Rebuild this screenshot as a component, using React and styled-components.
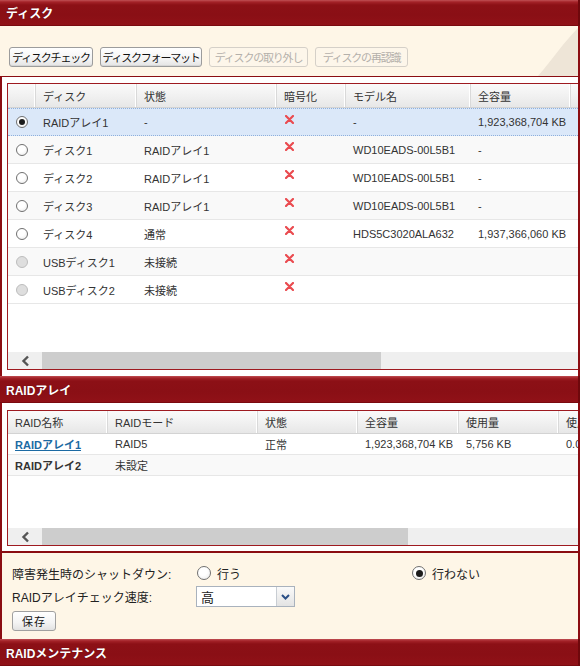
import React from "react";
import styled, { createGlobalStyle } from "styled-components";

const GlobalStyle = createGlobalStyle`
  html, body { margin: 0; padding: 0; background: #fff; }
  body {
    font-family: "Liberation Sans", "Noto Sans CJK JP", sans-serif;
    color: #333;
  }
  *, *::before, *::after { box-sizing: border-box; }
`;

const RED = "#8b0d12";

const Page = styled.div`
  width: 580px;
  display: flex;
  flex-direction: column;
`;

const SectionBar = styled.div`
  height: ${(p) => p.h || 27}px;
  flex-shrink: 0;
  display: flex;
  align-items: center;
  padding-left: 6px;
  color: #fff;
  font-size: 12px;
  font-weight: bold;
  text-shadow: 0 0 1px rgba(0, 0, 0, 0.4);
  background: linear-gradient(#c05055 0, #a42228 2px, #8c1016 5px, #8a0f15 60%, #901117 100%);
  border-right: 2px solid #6e080c;
  border-bottom: 1px solid #7a0a0f;
`;

const Toolbar = styled.div`
  position: relative;
  height: 50px;
  flex-shrink: 0;
  background: #fef6e7;
  border-right: 2px solid ${RED};
  display: flex;
  align-items: flex-end;
  gap: 7px;
  padding: 0 0 9px 9px;
  overflow: hidden;
`;

const Swoosh = styled.svg`
  position: absolute;
  right: 0;
  top: 0;
`;

const ToolButton = styled.button`
  position: relative;
  width: ${(p) => p.w}px;
  height: 20px;
  flex-shrink: 0;
  padding: 0;
  font-family: inherit;
  font-size: 11px;
  letter-spacing: -1.2px;
  white-space: nowrap;
  overflow: visible;
  border-radius: 3px;
  color: ${(p) => (p.disabled ? "#b4b0aa" : "#111")};
  border: 1px solid ${(p) => (p.disabled ? "#d5d0c8" : "#9c9c9c")};
  background: ${(p) =>
    p.disabled ? "#fdf6ea" : "linear-gradient(#ffffff, #f4f4f4 60%, #e4e4e4)"};
  box-shadow: ${(p) => (p.disabled ? "none" : "inset 0 -1px 0 #d6d6d6")};
`;

const GridPanel = styled.div`
  background: #fff;
  flex-shrink: 0;
  border-left: 2px solid ${RED};
  border-right: 2px solid ${RED};
  border-top: ${(p) => (p.topLine ? `1px solid ${RED}` : "none")};
  padding: ${(p) => p.pad};
`;

const GridBox = styled.div`
  border: 1px solid #9e1a20;
  border-right: none;
  height: ${(p) => p.h}px;
  display: flex;
  flex-direction: column;
  overflow: hidden;
`;

const Row = styled.div`
  display: grid;
  grid-template-columns: ${(p) => p.cols};
  height: ${(p) => p.h}px;
  flex-shrink: 0;
  font-size: 11px;
  background: ${(p) => (p.selected ? "#dbe8f9" : p.alt ? "#f9f9f9" : "#fff")};
  border-top: ${(p) => (p.selected ? "1px dotted #8fb0dc" : "none")};
  border-bottom: ${(p) => (p.selected ? "1px dotted #8fb0dc" : "1px solid #e7e7e7")};
`;

const HeadRow = styled(Row)`
  background: linear-gradient(#fafafa, #f1f1f1 50%, #e7e7e7);
  border-bottom: 1px solid #d3d3d3;
  color: #333;
`;

const HeadCell = styled.div`
  display: flex;
  align-items: center;
  padding-left: 7px;
  border-right: 1px solid #d9d9d9;
  box-shadow: inset -1px 0 0 #fff;
  white-space: nowrap;
  overflow: hidden;
`;

const Cell = styled.div`
  display: flex;
  align-items: center;
  justify-content: ${(p) => (p.center ? "center" : "flex-start")};
  padding-left: ${(p) => (p.center ? 0 : 7)}px;
  white-space: nowrap;
  overflow: hidden;
  font-weight: ${(p) => (p.bold ? "bold" : "normal")};
`;

const MarkCell = styled.div`
  display: flex;
  align-items: flex-start;
  padding: 6px 0 0 8px;
`;

const NameLink = styled.a`
  color: #1c6aa3;
  font-weight: bold;
  text-decoration: underline;
`;

const Body = styled.div`
  flex: 1;
  display: flex;
  flex-direction: column;
`;

const Radio = styled.span`
  width: 12px;
  height: 12px;
  border-radius: 50%;
  display: inline-flex;
  align-items: center;
  justify-content: center;
  flex-shrink: 0;
  border: 1px solid ${(p) => (p.disabled ? "#bdbdbd" : "#707070")};
  background: ${(p) =>
    p.disabled ? "#dedede" : "radial-gradient(circle at 40% 35%, #fff 40%, #e6e6e6)"};
  &::after {
    content: "";
    width: 6px;
    height: 6px;
    border-radius: 50%;
    background: ${(p) => (p.checked ? "#1b1b1b" : "transparent")};
  }
`;

const HScroll = styled.div`
  height: 17px;
  flex-shrink: 0;
  display: flex;
  background: #efefef;
`;

const ScrollArrow = styled.div`
  width: 34px;
  display: flex;
  align-items: center;
  justify-content: center;
`;

const ScrollThumb = styled.div`
  width: ${(p) => p.w}px;
  background: #cdcdcd;
`;

const SettingsPanel = styled.div`
  background: #fef6e7;
  flex-shrink: 0;
  border-top: 2px solid ${RED};
  border-left: 2px solid ${RED};
  border-right: 2px solid ${RED};
  height: 88px;
  padding: 10px 0 0 10px;
  display: grid;
  grid-template-columns: 184px 215px 1fr;
  grid-template-rows: 20px 21px 20px;
  row-gap: 3px;
  font-size: 12px;
  color: #222;
`;

const Label = styled.div`
  display: flex;
  align-items: center;
  white-space: nowrap;
`;

const Choice = styled.label`
  display: flex;
  align-items: center;
  gap: 6px;
  padding-left: 1px;
`;

const BigRadio = styled(Radio)`
  width: 14px;
  height: 14px;
  &::after {
    width: 7px;
    height: 7px;
  }
`;

const Select = styled.div`
  width: 99px;
  height: 21px;
  border: 1px solid #a9b2bd;
  background: #fff;
  display: flex;
  align-items: center;
  justify-content: space-between;
  padding-left: 4px;
  font-size: 13px;
`;

const SelectArrow = styled.div`
  width: 18px;
  height: 19px;
  border-left: 1px solid #c8cdd3;
  background: linear-gradient(#fafafa, #e3e3e3);
  display: flex;
  align-items: center;
  justify-content: center;
`;

const ButtonRow = styled.div`
  grid-column: 1 / 4;
`;

const SaveButton = styled.button`
  width: 44px;
  height: 20px;
  padding: 0;
  font-family: inherit;
  font-size: 11px;
  letter-spacing: 1px;
  color: #111;
  border: 1px solid #a0a0a0;
  border-radius: 3px;
  background: linear-gradient(#ffffff, #f3f3f3 60%, #e2e2e2);
  margin-top: 1px;
`;

const Cross = () => (
  <svg width="9" height="9" viewBox="0 0 9 9">
    <path d="M1 1 L8 8 M8 1 L1 8" stroke="#ea4b50" strokeWidth="2.2" strokeLinecap="round" />
  </svg>
);

const Chevron = () => (
  <svg width="9" height="12" viewBox="0 0 9 12">
    <path d="M7 1.5 L2.5 6 L7 10.5" stroke="#555" strokeWidth="2.4" fill="none" />
  </svg>
);

const DISK_COLS = "28px 101px 140px 69px 125px 100px 100px";
const RAID_COLS = "100px 150px 100px 101px 100px 100px";

const disks = [
  { name: "RAIDアレイ1", state: "-", model: "-", size: "1,923,368,704 KB", checked: true },
  { name: "ディスク1", state: "RAIDアレイ1", model: "WD10EADS-00L5B1", size: "-" },
  { name: "ディスク2", state: "RAIDアレイ1", model: "WD10EADS-00L5B1", size: "-" },
  { name: "ディスク3", state: "RAIDアレイ1", model: "WD10EADS-00L5B1", size: "-" },
  { name: "ディスク4", state: "通常", model: "HDS5C3020ALA632", size: "1,937,366,060 KB" },
  { name: "USBディスク1", state: "未接続", model: "", size: "", disabled: true },
  { name: "USBディスク2", state: "未接続", model: "", size: "", disabled: true },
];

const DiskGrid = () => (
  <GridBox h={287}>
    <HeadRow cols={DISK_COLS} h={24}>
      <HeadCell />
      <HeadCell>ディスク</HeadCell>
      <HeadCell>状態</HeadCell>
      <HeadCell>暗号化</HeadCell>
      <HeadCell>モデル名</HeadCell>
      <HeadCell>全容量</HeadCell>
      <HeadCell>空き容量</HeadCell>
    </HeadRow>
    <Body>
      {disks.map((d, i) => (
        <Row key={d.name} cols={DISK_COLS} h={28} selected={d.checked} alt={i % 2 === 1}>
          <Cell center>
            <Radio checked={d.checked} disabled={d.disabled} />
          </Cell>
          <Cell>{d.name}</Cell>
          <Cell>{d.state}</Cell>
          <MarkCell>
            <Cross />
          </MarkCell>
          <Cell>{d.model}</Cell>
          <Cell>{d.size}</Cell>
          <Cell>{d.model && d.model !== "-" ? "-" : ""}</Cell>
        </Row>
      ))}
    </Body>
    <HScroll>
      <ScrollArrow>
        <Chevron />
      </ScrollArrow>
      <ScrollThumb w={339} />
    </HScroll>
  </GridBox>
);

const RaidGrid = () => (
  <GridBox h={136}>
    <HeadRow cols={RAID_COLS} h={23}>
      <HeadCell>RAID名称</HeadCell>
      <HeadCell>RAIDモード</HeadCell>
      <HeadCell>状態</HeadCell>
      <HeadCell>全容量</HeadCell>
      <HeadCell>使用量</HeadCell>
      <HeadCell>使用率</HeadCell>
    </HeadRow>
    <Body>
      <Row cols={RAID_COLS} h={21}>
        <Cell>
          <NameLink>RAIDアレイ1</NameLink>
        </Cell>
        <Cell>RAID5</Cell>
        <Cell>正常</Cell>
        <Cell>1,923,368,704 KB</Cell>
        <Cell>5,756 KB</Cell>
        <Cell>0.00 %</Cell>
      </Row>
      <Row cols={RAID_COLS} h={21} alt>
        <Cell bold>RAIDアレイ2</Cell>
        <Cell>未設定</Cell>
        <Cell />
        <Cell />
        <Cell />
        <Cell />
      </Row>
    </Body>
    <HScroll>
      <ScrollArrow>
        <Chevron />
      </ScrollArrow>
      <ScrollThumb w={366} />
    </HScroll>
  </GridBox>
);

export default function App() {
  return (
    <Page>
      <GlobalStyle />
      <SectionBar h={26}>ディスク</SectionBar>
      <Toolbar>
        <Swoosh width="70" height="50" viewBox="0 0 70 50">
          <path d="M30 50 C 44 34, 56 16, 70 2 L 70 50 Z" fill="#eee5d7" />
        </Swoosh>
        <ToolButton w={84}>ディスクチェック</ToolButton>
        <ToolButton w={102}>ディスクフォーマット</ToolButton>
        <ToolButton w={99} disabled>
          ディスクの取り外し
        </ToolButton>
        <ToolButton w={93} disabled>
          ディスクの再認識
        </ToolButton>
      </Toolbar>
      <GridPanel topLine pad="6px 0 6px 5px">
        <DiskGrid />
      </GridPanel>
      <SectionBar>RAIDアレイ</SectionBar>
      <GridPanel pad="7px 0 5px 5px">
        <RaidGrid />
      </GridPanel>
      <SettingsPanel>
        <Label>障害発生時のシャットダウン:</Label>
        <Choice>
          <BigRadio />
          行う
        </Choice>
        <Choice>
          <BigRadio checked />
          行わない
        </Choice>
        <Label>RAIDアレイチェック速度:</Label>
        <Select>
          高
          <SelectArrow>
            <svg width="9" height="6" viewBox="0 0 9 6">
              <path d="M1 1 L4.5 4.5 L8 1" stroke="#2b4f86" strokeWidth="2" fill="none" />
            </svg>
          </SelectArrow>
        </Select>
        <div />
        <ButtonRow>
          <SaveButton>保存</SaveButton>
        </ButtonRow>
      </SettingsPanel>
      <SectionBar>RAIDメンテナンス</SectionBar>
    </Page>
  );
}
